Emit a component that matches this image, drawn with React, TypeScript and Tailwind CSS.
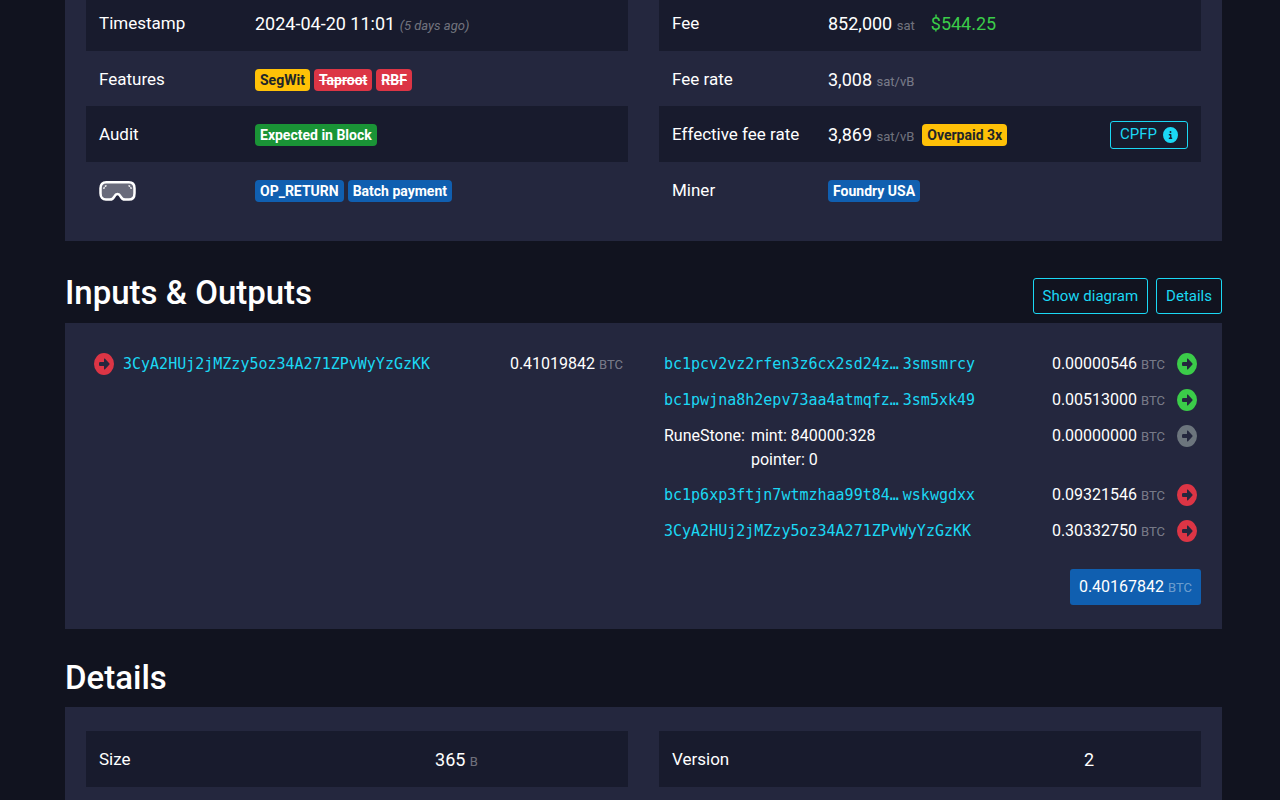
import type { ReactNode } from 'react';
import { FaCircleInfo, FaCircleRight } from 'react-icons/fa6';

const badgeTones = {
  yellow: 'bg-[#ffc107] text-[#212529]',
  red: 'bg-[#dc3545] text-white line-through',
  green: 'bg-[#1a9436] text-white',
  blue: 'bg-[#105fb0] text-white',
};

function Badge({ tone, children }: { tone: keyof typeof badgeTones; children: ReactNode }) {
  return (
    <span className={`inline-flex h-[22px] items-center rounded-[4px] px-[5px] text-sm font-bold ${badgeTones[tone]}`}>
      {children}
    </span>
  );
}

function Unit({ children }: { children: ReactNode }) {
  return <span className="text-[13px] text-white/40">{children}</span>;
}

const arrowTones = {
  red: 'text-[#dc3545]',
  green: 'text-[#3bcc49]',
  gray: 'text-[#6c757d]',
};

function Arrow({ tone, label }: { tone: keyof typeof arrowTones; label: string }) {
  return (
    <a href="#" aria-label={label} className={`block ${arrowTones[tone]}`}>
      <FaCircleRight preserveAspectRatio="none" className="h-[22px] w-5" />
    </a>
  );
}

function Goggles() {
  return (
    <svg viewBox="0 0 37 20" className="h-5 w-[37px]" role="img" aria-label="Goggles">
      <path
        d="M7.2 1.3H29.8C33.6 1.3 35.5 3.6 35.5 7.2V12.2C35.5 16.4 33.4 18.6 30 18.6H26C23.6 18.6 22.6 17.4 21.7 15.6C20.8 13.9 19.9 13.1 18.5 13.1C17.1 13.1 16.2 13.9 15.3 15.6C14.4 17.4 13.4 18.6 11 18.6H7C3.6 18.6 1.5 16.4 1.5 12.2V7.2C1.5 3.6 3.4 1.3 7.2 1.3Z"
        fill="#696b7b"
        stroke="#fff"
        strokeWidth="2.5"
      />
      <path d="M4.9 7.4L5.1 6.6M6.3 5.2L7 4.8M32.1 7.4L31.9 6.6M30.7 5.2L30 4.8" stroke="#fff" strokeWidth="1.4" strokeLinecap="round" />
    </svg>
  );
}

function InfoTable({ rows, labelCol }: { rows: { label: ReactNode; value: ReactNode }[]; labelCol: string }) {
  return (
    <table className="w-full table-fixed self-start text-left">
      <colgroup>
        <col className={labelCol} />
        <col />
      </colgroup>
      <tbody>
        {rows.map((row, i) => (
          <tr key={i} className="odd:h-14 odd:bg-[#181b2d] even:h-[55px]">
            <th scope="row" className="px-[13px] pt-[2px] text-[17px] font-normal whitespace-nowrap">{row.label}</th>
            <td className="px-[13px] pt-[2px] text-lg whitespace-nowrap">{row.value}</td>
          </tr>
        ))}
      </tbody>
    </table>
  );
}

function Address({ head, tail }: { head: string; tail?: string }) {
  return (
    <a href="#" className="font-['DejaVu_Sans_Mono','Liberation_Mono',monospace] text-[15px] text-[#1bd8f4]">
      {head}
      {tail && <span className="ml-1">{tail}</span>}
    </a>
  );
}

function OutlineButton({ children }: { children: ReactNode }) {
  return (
    <button type="button" className="h-9 rounded-[3px] border border-[#1bd8f4] px-[9px] text-[15px] text-[#1bd8f4]">
      {children}
    </button>
  );
}

function Card({ className, children }: { className: string; children: ReactNode }) {
  return <div className={`grid grid-cols-2 gap-x-[31px] bg-[#24273e] px-[21px] ${className}`}>{children}</div>;
}

const outputs: { to: ReactNode; amount: string; tone: keyof typeof arrowTones; label: string; height: string }[] = [
  { to: <Address head="bc1pcv2vz2rfen3z6cx2sd24z…" tail="3smsmrcy" />, amount: '0.00000546', tone: 'green', label: 'Unspent output', height: 'h-9' },
  { to: <Address head="bc1pwjna8h2epv73aa4atmqfz…" tail="3sm5xk49" />, amount: '0.00513000', tone: 'green', label: 'Unspent output', height: 'h-9' },
  {
    to: (
      <div className="flex gap-[6px]">
        <span>RuneStone:</span>
        <span>mint: 840000:328<br />pointer: 0</span>
      </div>
    ),
    amount: '0.00000000',
    tone: 'gray',
    label: 'Unspendable output',
    height: 'h-[59px]',
  },
  { to: <Address head="bc1p6xp3ftjn7wtmzhaa99t84…" tail="wskwgdxx" />, amount: '0.09321546', tone: 'red', label: 'Spent output', height: 'h-9' },
  { to: <Address head="3CyA2HUj2jMZzy5oz34A271ZPvWyYzGzKK" />, amount: '0.30332750', tone: 'red', label: 'Spent output', height: 'h-9' },
];

export default function App() {
  return (
    <div className="flow-root h-screen overflow-hidden bg-[#11131f] font-['Roboto','Inter',sans-serif] text-white">
      <main className="-mt-[5px] pr-[58px] pl-[65px]">
        <Card className="pb-6">
          <InfoTable
            labelCol="w-[156px]"
            rows={[
              {
                label: 'Timestamp',
                value: <>2024-04-20 11:01 <i className="text-[13px] text-white/40">(5 days ago)</i></>,
              },
              {
                label: 'Features',
                value: (
                  <div className="flex gap-1">
                    <Badge tone="yellow">SegWit</Badge>
                    <Badge tone="red">Taproot</Badge>
                    <Badge tone="red">RBF</Badge>
                  </div>
                ),
              },
              { label: 'Audit', value: <div className="flex"><Badge tone="green">Expected in Block</Badge></div> },
              {
                label: <Goggles />,
                value: (
                  <div className="flex gap-1">
                    <Badge tone="blue">OP_RETURN</Badge>
                    <Badge tone="blue">Batch payment</Badge>
                  </div>
                ),
              },
            ]}
          />
          <InfoTable
            labelCol="w-[156px]"
            rows={[
              { label: 'Fee', value: <>852,000 <Unit>sat</Unit><span className="ml-4 text-[#3bcc49]">$544.25</span></> },
              { label: 'Fee rate', value: <>3,008 <Unit>sat/vB</Unit></> },
              {
                label: 'Effective fee rate',
                value: (
                  <div className="flex items-center gap-2">
                    <span>3,869 <Unit>sat/vB</Unit></span>
                    <Badge tone="yellow">Overpaid 3x</Badge>
                    <button type="button" className="ml-auto flex h-7 items-center gap-[6px] rounded-[3px] border border-[#1bd8f4] px-[9px] text-[15px] text-[#1bd8f4]">
                      CPFP <FaCircleInfo preserveAspectRatio="none" className="h-4 w-[15px]" />
                    </button>
                  </div>
                ),
              },
              { label: 'Miner', value: <div className="flex"><Badge tone="blue">Foundry USA</Badge></div> },
            ]}
          />
        </Card>

        <div className="flex items-end justify-between pt-7 pb-[9px]">
          <h2 className="text-[33px] leading-[42px] font-medium">Inputs &amp; Outputs</h2>
          <div className="flex gap-2 pt-[9px]">
            <OutlineButton>Show diagram</OutlineButton>
            <OutlineButton>Details</OutlineButton>
          </div>
        </div>
        <Card className="pt-[23px] pb-6 text-base">
          <table className="w-full self-start">
            <tbody>
              <tr className="h-9">
                <td className="w-[37px] pl-2"><Arrow tone="red" label="Previous output" /></td>
                <td><Address head="3CyA2HUj2jMZzy5oz34A271ZPvWyYzGzKK" /></td>
                <td className="pr-[5px] text-right">0.41019842 <Unit>BTC</Unit></td>
              </tr>
            </tbody>
          </table>
          <div>
            <table className="w-full">
              <tbody>
                {outputs.map((o) => (
                  <tr key={o.amount} className={`align-top leading-6 ${o.height}`}>
                    <td className="pt-[6px] pl-[5px]">{o.to}</td>
                    <td className="pt-[6px] text-right">{o.amount} <Unit>BTC</Unit></td>
                    <td className="w-9 pt-[7px] pl-3"><Arrow tone={o.tone} label={o.label} /></td>
                  </tr>
                ))}
              </tbody>
            </table>
            <div className="mt-5 flex justify-end">
              <button type="button" className="h-9 rounded-[3px] bg-[#105fb0] px-[9px]">
                0.40167842 <Unit>BTC</Unit>
              </button>
            </div>
          </div>
        </Card>

        <h2 className="pt-7 pb-2 text-[33px] leading-[42px] font-medium">Details</h2>
        <Card className="pt-6 pb-6">
          <InfoTable labelCol="w-[62%]" rows={[{ label: 'Size', value: <>365 <Unit>B</Unit></> }]} />
          <InfoTable labelCol="w-[76%]" rows={[{ label: 'Version', value: '2' }]} />
        </Card>
      </main>
    </div>
  );
}
